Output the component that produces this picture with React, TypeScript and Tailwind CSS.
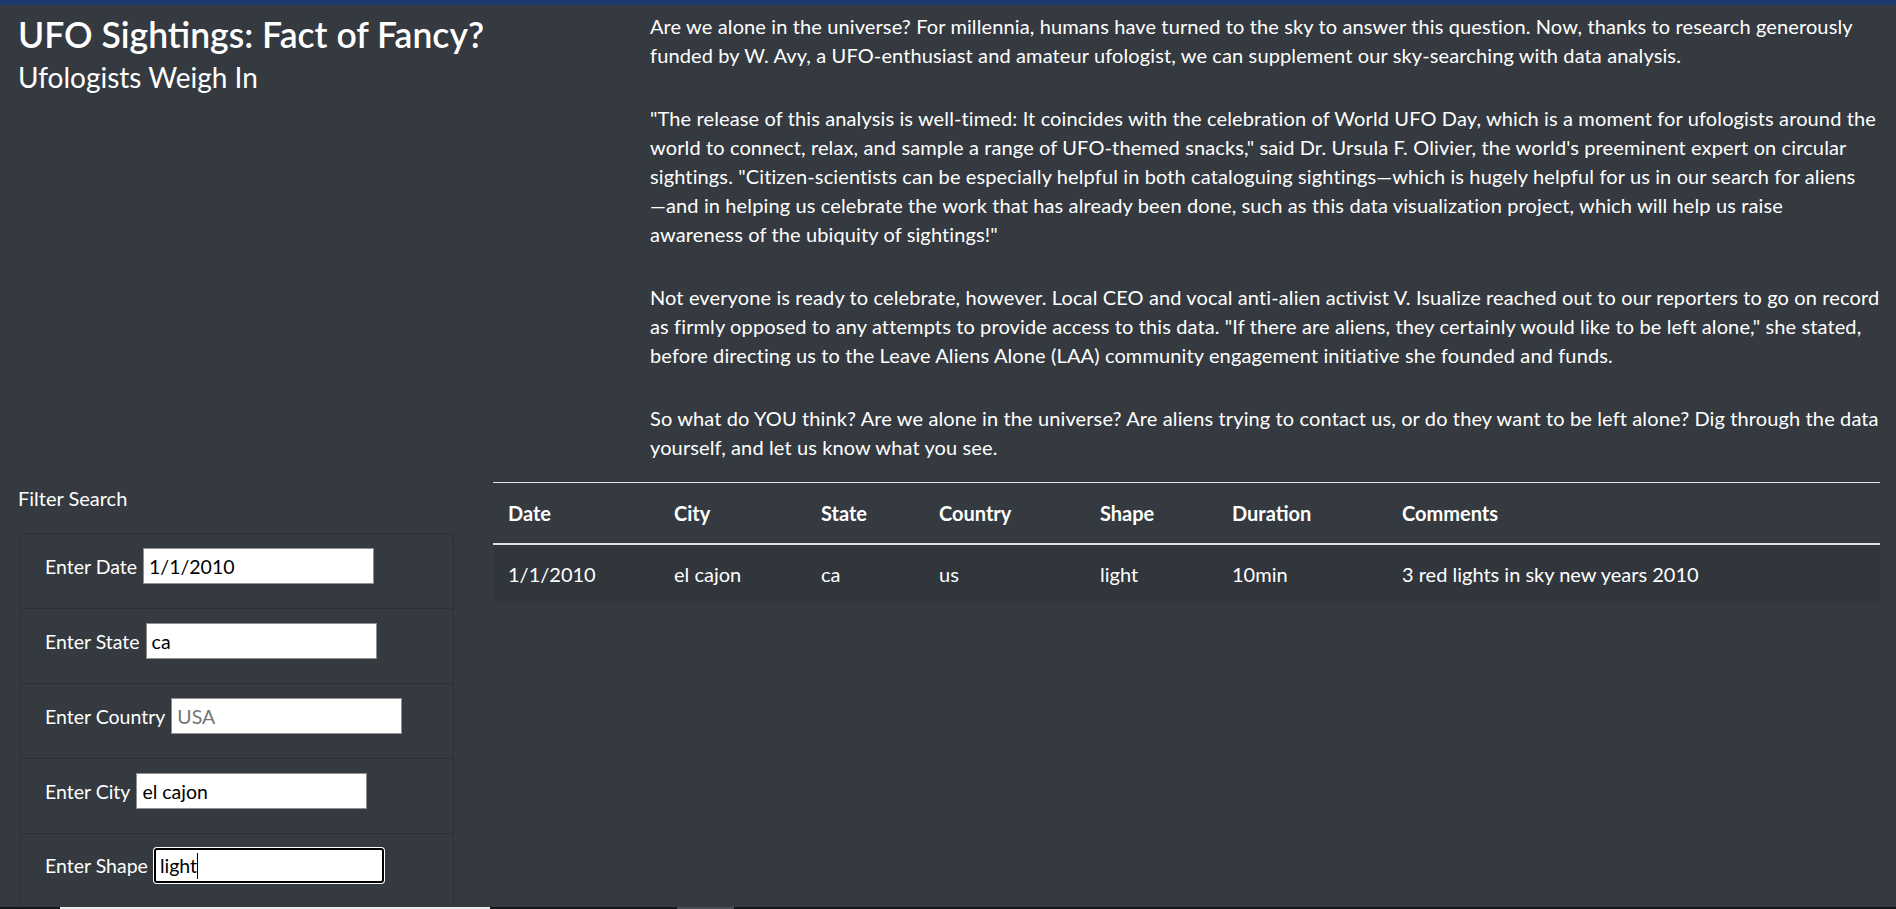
import type { ReactNode } from 'react';

const sightings = [
  {
    datetime: '1/1/2010',
    city: 'el cajon',
    state: 'ca',
    country: 'us',
    shape: 'light',
    duration: '10min',
    comments: '3 red lights in sky new years 2010',
  },
];

const columns = [
  { label: 'Date', width: 'w-[166px]' },
  { label: 'City', width: 'w-[147px]' },
  { label: 'State', width: 'w-[118px]' },
  { label: 'Country', width: 'w-[161px]' },
  { label: 'Shape', width: 'w-[132px]' },
  { label: 'Duration', width: 'w-[170px]' },
  { label: 'Comments', width: '' },
];

const paragraphs = [
  [
    'Are we alone in the universe? For millennia, humans have turned to the sky to answer this question. Now, thanks to research generously',
    'funded by W. Avy, a UFO-enthusiast and amateur ufologist, we can supplement our sky-searching with data analysis.',
  ],
  [
    '"The release of this analysis is well-timed: It coincides with the celebration of World UFO Day, which is a moment for ufologists around the',
    'world to connect, relax, and sample a range of UFO-themed snacks," said Dr. Ursula F. Olivier, the world\'s preeminent expert on circular',
    'sightings. "Citizen-scientists can be especially helpful in both cataloguing sightings—which is hugely helpful for us in our search for aliens',
    '—and in helping us celebrate the work that has already been done, such as this data visualization project, which will help us raise',
    'awareness of the ubiquity of sightings!"',
  ],
  [
    'Not everyone is ready to celebrate, however. Local CEO and vocal anti-alien activist V. Isualize reached out to our reporters to go on record',
    'as firmly opposed to any attempts to provide access to this data. "If there are aliens, they certainly would like to be left alone," she stated,',
    'before directing us to the Leave Aliens Alone (LAA) community engagement initiative she founded and funds.',
  ],
  [
    'So what do YOU think? Are we alone in the universe? Are aliens trying to contact us, or do they want to be left alone? Dig through the data',
    'yourself, and let us know what you see.',
  ],
];

function FilterItem({ label, children, first }: { label: string; children: ReactNode; first?: boolean }) {
  return (
    <li className={`flex items-center gap-[6px] px-[24px] pt-[14px] pb-[24px] ${first ? '' : 'border-t border-[#2c3136]'}`}>
      <label className="whitespace-nowrap">{label}</label>
      {children}
    </li>
  );
}

function TextInput({ value, placeholder }: { value?: string; placeholder?: string }) {
  return (
    <input
      type="text"
      defaultValue={value}
      placeholder={placeholder}
      className="w-[231px] h-[36px] bg-white border border-[#8f8f8f] px-[5px] text-black placeholder:text-[#757575] outline-none"
    />
  );
}

export default function App() {
  return (
    <div className="min-h-[909px] bg-[#343a40] text-white font-['Segoe_UI',Lato,sans-serif] text-[20px] leading-[29px]">
      <div className="h-[5px] bg-[#1b3b6f]" />

      <div className="flex pt-[7px]">
        <div className="w-[632px] shrink-0 px-[18px]">
          <h2 className="text-[35.5px] leading-[46px] font-semibold">UFO Sightings: Fact of Fancy?</h2>
          <h4 className="text-[28px] leading-[32px] mt-[3px]">Ufologists Weigh In</h4>
        </div>
        <div className="flex-1 px-[18px] tracking-[0.12px]">
          {paragraphs.map((lines, i) => (
            <p key={i} className={`whitespace-nowrap ${i === paragraphs.length - 1 ? 'mb-[20px]' : 'mb-[34px]'}`}>
              {lines.map((line, j) => (
                <span key={j}>
                  {line}
                  {j < lines.length - 1 && <br />}
                </span>
              ))}
            </p>
          ))}
        </div>
      </div>

      <div className="flex">
        <div className="w-[474px] shrink-0 px-[18px]">
          <div className="pt-[2px] pb-[20px]">Filter Search</div>
          <ul className="mx-[2px] border border-[#2c3136] border-b-0 rounded-t-[5px] text-[19.5px]">
            <FilterItem label="Enter Date" first>
              <TextInput value="1/1/2010" />
            </FilterItem>
            <FilterItem label="Enter State">
              <TextInput value="ca" />
            </FilterItem>
            <FilterItem label="Enter Country">
              <TextInput placeholder="USA" />
            </FilterItem>
            <FilterItem label="Enter City">
              <TextInput value="el cajon" />
            </FilterItem>
            <FilterItem label="Enter Shape">
              <div className="flex items-center w-[230px] h-[35px] bg-white border-2 border-black rounded-[3px] ring-1 ring-white px-[4px] text-black">
                <span>light</span>
                <span className="w-px h-[26px] bg-black" />
              </div>
            </FilterItem>
          </ul>
        </div>

        <div className="flex-1 pl-[19px] pr-[16px]">
          <table className="w-full border-collapse text-left">
            <thead>
              <tr className="border-t border-[#dee2e6] border-b-2 border-b-[#dee2e6]">
                {columns.map((col) => (
                  <th key={col.label} className={`${col.width} px-[15px] pt-[16px] pb-[15px] font-bold`}>
                    {col.label}
                  </th>
                ))}
              </tr>
            </thead>
            <tbody>
              {sightings.map((s) => (
                <tr key={s.datetime + s.city} className="bg-[#31363c]">
                  <td className="px-[15px] pt-[15px] pb-[14px]">{s.datetime}</td>
                  <td className="px-[15px] pt-[15px] pb-[14px]">{s.city}</td>
                  <td className="px-[15px] pt-[15px] pb-[14px]">{s.state}</td>
                  <td className="px-[15px] pt-[15px] pb-[14px]">{s.country}</td>
                  <td className="px-[15px] pt-[15px] pb-[14px]">{s.shape}</td>
                  <td className="px-[15px] pt-[15px] pb-[14px]">{s.duration}</td>
                  <td className="px-[15px] pt-[15px] pb-[14px]">{s.comments}</td>
                </tr>
              ))}
            </tbody>
          </table>
        </div>
      </div>

      <div className="flex h-[3px] bg-[#121416]">
        <div className="ml-[60px] w-[430px] bg-[#e9ecef]" />
        <div className="ml-[187px] w-[57px] bg-[#4a4f55]" />
      </div>
    </div>
  );
}
